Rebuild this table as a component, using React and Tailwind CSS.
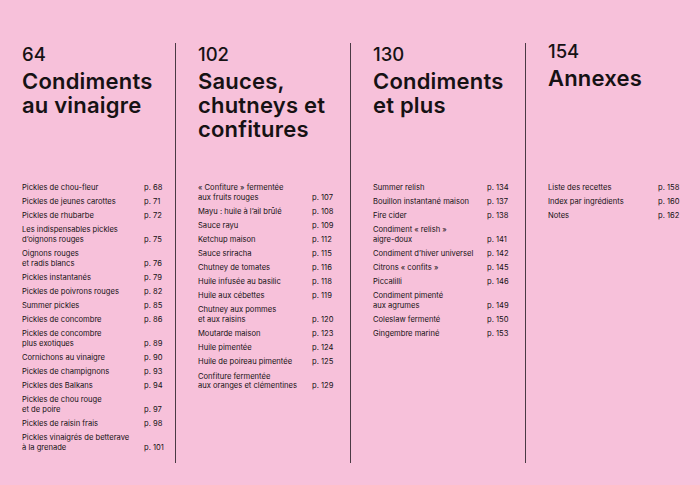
import React from "react";

// Table of contents, four chapters side by side
const chapters = [
  {
    page: "64",
    title: ["Condiments", "au vinaigre"],
    numCol: "grid-cols-[122px_auto]",
    lift: "",
    items: [
      [["Pickles de chou-fleur"], "p. 68"],
      [["Pickles de jeunes carottes"], "p. 71"],
      [["Pickles de rhubarbe"], "p. 72"],
      [["Les indispensables pickles", "d’oignons rouges"], "p. 75"],
      [["Oignons rouges", "et radis blancs"], "p. 76"],
      [["Pickles instantanés"], "p. 79"],
      [["Pickles de poivrons rouges"], "p. 82"],
      [["Summer pickles"], "p. 85"],
      [["Pickles de concombre"], "p. 86"],
      [["Pickles de concombre", "plus exotiques"], "p. 89"],
      [["Cornichons au vinaigre"], "p. 90"],
      [["Pickles de champignons"], "p. 93"],
      [["Pickles des Balkans"], "p. 94"],
      [["Pickles de chou rouge", "et de poire"], "p. 97"],
      [["Pickles de raisin frais"], "p. 98"],
      [["Pickles vinaigrés de betterave", "à la grenade"], "p. 101"],
    ],
  },
  {
    page: "102",
    title: ["Sauces,", "chutneys et", "confitures"],
    numCol: "grid-cols-[114px_auto]",
    lift: "",
    items: [
      [["« Confiture » fermentée", "aux fruits rouges"], "p. 107"],
      [["Mayu : huile à l’ail brûlé"], "p. 108"],
      [["Sauce rayu"], "p. 109"],
      [["Ketchup maison"], "p. 112"],
      [["Sauce sriracha"], "p. 115"],
      [["Chutney de tomates"], "p. 116"],
      [["Huile infusée au basilic"], "p. 118"],
      [["Huile aux cébettes"], "p. 119"],
      [["Chutney aux pommes", "et aux raisins"], "p. 120"],
      [["Moutarde maison"], "p. 123"],
      [["Huile pimentée"], "p. 124"],
      [["Huile de poireau pimentée"], "p. 125"],
      [["Confiture fermentée", "aux oranges et clémentines"], "p. 129"],
    ],
  },
  {
    page: "130",
    title: ["Condiments", "et plus"],
    numCol: "grid-cols-[114px_auto]",
    lift: "",
    items: [
      [["Summer relish"], "p. 134"],
      [["Bouillon instantané maison"], "p. 137"],
      [["Fire cider"], "p. 138"],
      [["Condiment « relish »", "aigre-doux"], "p. 141"],
      [["Condiment d’hiver universel"], "p. 142"],
      [["Citrons « confits »"], "p. 145"],
      [["Piccalilli"], "p. 146"],
      [["Condiment pimenté", "aux agrumes"], "p. 149"],
      [["Coleslaw fermenté"], "p. 150"],
      [["Gingembre mariné"], "p. 153"],
    ],
  },
  {
    page: "154",
    title: ["Annexes"],
    numCol: "grid-cols-[110px_auto]",
    lift: "-mt-[3px]",
    items: [
      [["Liste des recettes"], "p. 158"],
      [["Index par ingrédients"], "p. 160"],
      [["Notes"], "p. 162"],
    ],
  },
];

function Chapter({ chapter, first }) {
  return (
    <div
      className={
        first
          ? "w-[175px] shrink-0 pl-[22px] pr-2"
          : "w-[175px] shrink-0 border-l border-[#4a3a44] pl-[22px] pr-2"
      }
    >
      <div className="h-[140px] flex flex-col">
        <div className={chapter.lift}>
          <div className="text-[18.5px] leading-[22px] font-medium">
            {chapter.page}
          </div>
          <div className="mt-[4px] text-[22px] leading-[24px] font-semibold tracking-[0.2px]">
            {chapter.title.map((line) => (
              <div key={line}>{line}</div>
            ))}
          </div>
        </div>
      </div>
      <div className="flex flex-col gap-[4.4px] text-[7.6px] leading-[9.7px]">
        {chapter.items.map(([lines, p]) => (
          <div key={lines[0] + p} className={"grid items-end " + chapter.numCol}>
            <div>
              {lines.map((line) => (
                <div key={line} className="whitespace-nowrap">
                  {line}
                </div>
              ))}
            </div>
            <div className="whitespace-nowrap">{p}</div>
          </div>
        ))}
      </div>
    </div>
  );
}

export default function App() {
  return (
    <div
      className="w-[700px] h-[485px] overflow-hidden bg-[#f7c1da] text-[#161214]"
      style={{ fontFamily: "Inter, 'Liberation Sans', sans-serif" }}
    >
      <div className="flex mt-[43px] h-[420px]">
        {chapters.map((c, i) => (
          <Chapter key={c.page} chapter={c} first={i === 0} />
        ))}
      </div>
    </div>
  );
}
